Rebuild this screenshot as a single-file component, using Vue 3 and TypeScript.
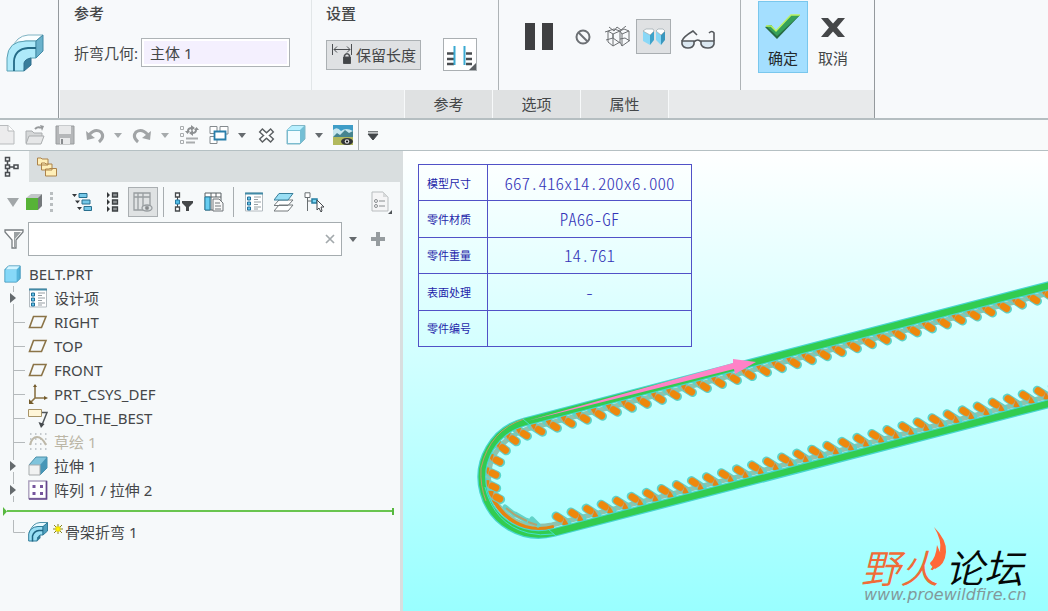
<script setup lang="ts">
import { ref } from 'vue'

interface TreeNode {
  label: string
  icon: string
  expandable?: boolean
  muted?: boolean
}

interface Tooth {
  x: number
  y: number
  angle: number
  side: number
}

const bendBody = ref('主体 1')
const query = ref('')

const tabs: string[] = ['参考', '选项', '属性']

const nodes: TreeNode[] = [
  { label: '设计项', icon: 'design', expandable: true },
  { label: 'RIGHT', icon: 'plane' },
  { label: 'TOP', icon: 'plane' },
  { label: 'FRONT', icon: 'plane' },
  { label: 'PRT_CSYS_DEF', icon: 'csys' },
  { label: 'DO_THE_BEST', icon: 'note' },
  { label: '草绘 1', icon: 'sketch', muted: true },
  { label: '拉伸 1', icon: 'extrude', expandable: true },
  { label: '阵列 1 / 拉伸 2', icon: 'pattern', expandable: true },
]

const specs: [string, string][] = [
  ['模型尺寸', '667.416x14.200x6.000'],
  ['零件材质', 'PA66-GF'],
  ['零件重量', '14.761'],
  ['表面处理', '-'],
  ['零件编号', ''],
]

const teeth: Tooth[] = []
for (let k = -16; k <= 20; k++) {
  teeth.push({ x: 362 + 15 * k, y: 220 - 3.97 * k, angle: 33, side: -1 })
}
for (let k = -13; k <= 20; k++) {
  teeth.push({ x: 351 + 15.04 * k, y: 315.5 - 3.93 * k, angle: 33, side: 1 })
}
const bendTeeth: [number, number, number, number][] = [
  [111, 289, 36, -1],
  [101, 298, 38, -1],
  [95, 310, 28, -1],
  [91, 323, 25, -1],
  [91, 336, 26, -1],
  [95, 347, 28, -1],
]
for (const [x, y, angle, side] of bendTeeth) teeth.push({ x, y, angle, side })
</script>

<template>
  <svg class="sprite" aria-hidden="true">
    <symbol id="i-bend" viewBox="0 0 38 38">
      <path d="M6 15Q10 2 22 1H37L30 7H20Q9 8 4 17Z" fill="#fafeff" stroke="#7fb3c3" />
      <path d="M1 37V24Q2 7 20 7H30V24H25Q19 25 18 37Z" fill="#aeeafa" stroke="#5ba0b4" />
      <path d="M30 7L37 1V17L30 24Z" fill="#6ab2cc" stroke="#438aa5" />
      <path d="M18 37V29Q19 25 25 24V31Z" fill="#397e9c" stroke="#30718f" />
      <path d="M8 37V27Q9 15 22 14H30" fill="none" stroke="#246b87" stroke-width="1.8" />
    </symbol>
    <symbol id="i-bend-small" viewBox="0 0 20 20">
      <path d="M2 9Q5 1 12 .5H19.500L15 5H9Q4 6 1 11Z" fill="#e8faff" stroke="#4f93ab" />
      <path d="M.7 19V12Q2 5 10 4.500H15V13H12Q9 14 9 19Z" fill="#9adff5" stroke="#2f7c99" />
      <path d="M15 4.500L19.500 .7V9L15 13Z" fill="#4f9fbd" stroke="#2f7c99" />
      <path d="M9 19.500Q9 14 12.500 13V16Z" fill="#2f7795" />
      <path d="M4.500 19.500V14Q6 9 11 8.500H15" fill="none" stroke="#1e6482" stroke-width="1.500" />
    </symbol>
    <symbol id="i-caret" viewBox="0 0 8 5"><path d="M0 0H8L4 5Z" fill="currentColor" /></symbol>
    <symbol id="i-part" viewBox="0 0 20 20">
      <path d="M1 5L5 1H18V15L14 19H1Z" fill="#55b5dc" stroke="#3b93b8" />
      <path d="M1.500 5.500H14V18.500H1.500Z" fill="#86d8f8" />
      <path d="M2 5L5 1.500H17.500L14 5Z" fill="#d5f5ff" />
    </symbol>
    <symbol id="i-design" viewBox="0 0 20 20">
      <path d="M1.500 1H18.500V19H1.500Z" fill="#fff" stroke="#b3bbc0" />
      <path d="M1 1.500H19" stroke="#418aa7" stroke-width="2" />
      <path d="M3.500 5H6.500V8H3.500ZM3.500 10H6.500V13H3.500ZM3.500 15H6.500V18H3.500Z" fill="#65c5ea" stroke="#236f98" />
      <path d="M10 5H17M10 7.500H14M10 10H17M10 12.500H14M10 15H17M10 17H14" stroke="#969ea3" />
    </symbol>
    <symbol id="i-plane" viewBox="0 0 20 20"><path d="M5.500 4.500H18L13.500 15.500H1.500Z" fill="none" stroke="#8b7447" stroke-width="1.600" /></symbol>
    <symbol id="i-csys" viewBox="0 0 20 20">
      <path d="M7 2V14H18M7 14L2 19" fill="none" stroke="#8b7447" stroke-width="1.600" />
      <path d="M5 3L7 0L9 3ZM16 12L20 14L16 16ZM1 15V20H6Z" fill="#735b2c" />
    </symbol>
    <symbol id="i-note" viewBox="0 0 20 20">
      <path d="M.5 1.500H13.500V8.500H.5Z" fill="#fff6d8" stroke="#a79468" />
      <path d="M14 4.500H19L14 17" fill="none" stroke="#51565a" stroke-width="1.500" />
      <path d="M10.500 14L16.500 16L13 20Z" fill="#454a4e" />
    </symbol>
    <symbol id="i-sketch" viewBox="0 0 20 20">
      <path d="M2 2H19M2 7H19M2 12H19M2 17H19" stroke="#b4bbc0" stroke-width="1.500" stroke-dasharray="1.500 3.500" />
      <path d="M2 13Q4 5 9 5Q14 5 18 13" fill="none" stroke="#bdb8a8" stroke-width="2" />
    </symbol>
    <symbol id="i-extrude" viewBox="0 0 20 20">
      <path d="M1 9L8 1H19V12L12 19Z" fill="#80c4dc" stroke="#4a8fa9" />
      <path d="M12 9L19 1V12L12 19Z" fill="#4796b7" />
      <path d="M1 9H12V19H1Z" fill="#f1f2f2" stroke="#a6abad" />
    </symbol>
    <symbol id="i-pattern" viewBox="0 0 20 20">
      <path d="M.8 1H18.500V18.500H.8Z" fill="#fff" stroke="#aaa0bd" stroke-width="1.400" />
      <path d="M18.500 1V19H1" fill="none" stroke="#65458d" stroke-width="1.600" />
      <path d="M4.500 5H7.500V8H4.500ZM12 5H15V8H12ZM4.500 12H7.500V15H4.500ZM12 12H15V15H12Z" fill="#76559d" />
    </symbol>
  </svg>

  <main class="app">
    <header class="ribbon">
      <div class="feature"><svg width="38" height="38"><use href="#i-bend" /></svg></div>
      <div class="dash">
        <div class="groups">
          <section class="group refs">
            <h2>参考</h2>
            <div class="field">
              <label for="bend-body">折弯几何:</label>
              <input id="bend-body" v-model="bendBody" type="text" />
            </div>
          </section>
          <section class="group settings">
            <h2>设置</h2>
            <div class="controls">
              <button class="keep" type="button" aria-pressed="true">
                <svg width="22" height="21" viewBox="0 0 22 21" fill="none" stroke="#4c4f52">
                  <path d="M1.500 0V11M20.500 0V11M3 5.500H19M6 2.500L3 5.500L6 8.500M16 2.500L19 5.500L16 8.500" />
                  <path d="M13.500 13V11.500Q16 8 18.500 11.500V13" stroke-width="1.500" /><path d="M12.500 13H19.500V19.500H12.500Z" fill="#424548" />
                </svg>
                <span>保留长度</span>
              </button>
              <button class="clip" type="button" aria-label="截面属性控制">
                <svg width="32" height="31" viewBox="0 0 32 31">
                  <path d="M3 14.500H10M3 20H10M3 25H10M22 14.500H28M22 20H28M22 25H28" stroke="#494d50" stroke-width="2.500" />
                  <path d="M10.500 7V26M20.500 7V26" stroke="#3ba9d1" stroke-width="2" />
                  <path d="M32 24V31H25Z" fill="#5c6064" />
                </svg>
              </button>
            </div>
          </section>
          <section class="group preview">
            <button type="button" aria-label="暂停" class="pause"><svg width="30" height="28"><path d="M1 0H11V27H1ZM18 0H29V27H18Z" fill="#3f4042" /></svg></button>
            <button type="button" aria-label="无预览"><svg width="16" height="16" fill="none" stroke="#6c7074" stroke-width="2"><circle cx="8" cy="8" r="6.500" /><path d="M3.500 3.500L12.500 12.500" /></svg></button>
            <button type="button" aria-label="分离"><svg width="26" height="22" viewBox="0 0 26 22" fill="none" stroke="#6d7073">
              <path d="M3 5L8 8L15 5L9 3ZM3 5V16L8 20L15 16V5M8 8V20M17 8L24 5V15L17 20L15 16M17 8V20M17 8L15 5L19 3L24 5M4 1L9 5L12 1M12 1L16 4L21 0M0 6L3 5M1 14L8 12L15 17M8 12V8M15 13L20 12L25 15" />
            </svg></button>
            <button type="button" class="attached" aria-label="附加" aria-pressed="true"><svg width="24" height="18" viewBox="0 0 24 18">
              <path d="M1 3V13L8 17V7Z" fill="#8ad8f7" /><path d="M8 7L12 3V12L8 17Z" fill="#3da2ca" />
              <path d="M14 3V12L19 17V7Z" fill="#86d6f5" /><path d="M19 7L23 3V12L19 17Z" fill="#3a97be" />
              <path d="M1 3L4 1H11L12 3L8 7ZM14 3L16 1H21L23 3L19 7Z" fill="#fff" stroke="#98a6ac" stroke-width=".7" />
            </svg></button>
            <button type="button" class="verify" aria-label="验证"><svg width="34" height="19" viewBox="0 0 34 19" fill="none" stroke="#55595d" stroke-width="1.600">
              <path d="M1 11H13V14Q12 18 7 18Q2 18 1 14ZM20 11H33V14Q32 18 27 18Q21 18 20 14Z" fill="#dbe8f1" />
              <path d="M13 12Q17 8 20 12M1 11Q2 7 12 1L16 5M33 11V3Q31 0 28 3" />
            </svg></button>
          </section>
          <section class="group finish">
            <button type="button" class="action ok">
              <svg width="36" height="26" viewBox="0 0 36 26"><path d="M0 13L6 11L11 18L26 1H35L12 25Z" fill="#276b43" /><path d="M1 12L6 11L11 17L26 1H35L12 22Z" fill="#35a05a" /><path d="M1 12H6L11 17L26 1H35" fill="none" stroke="#baf260" stroke-width="1.500" /></svg>
              <span>确定</span>
            </button>
            <button type="button" class="action">
              <svg width="24" height="26" viewBox="0 0 24 26"><path d="M0 4H7L12 9.500L17 4H24L16 13.500L24 23H17L12 17.500L7 23H0L8 13.500Z" fill="#454749" /></svg>
              <span>取消</span>
            </button>
          </section>
        </div>
        <nav class="tabs"><button v-for="tab in tabs" :key="tab" type="button">{{ tab }}</button></nav>
      </div>
    </header>

    <div class="quick">
      <button type="button" class="newdoc" aria-label="新建"><svg width="15" height="20" viewBox="0 0 15 20"><path d="M-5 .5H8L14 6V19H-5Z" fill="#ececed" stroke="#b8bbbd" /><path d="M8 .5V6H14" fill="#fff" stroke="#b8bbbd" /></svg></button>
      <button type="button" aria-label="打开"><svg width="20" height="20" viewBox="0 0 20 20"><path d="M1 18V6H7L9 8H17V11" fill="#d5d7d8" stroke="#aaadaf" /><path d="M4 11H19L16 19H1Z" fill="#e6e7e8" stroke="#aaadaf" /><path d="M10 4Q13 1 16 3" fill="none" stroke="#96999b" stroke-width="2" /><path d="M15 0L19 1L17 6Z" fill="#96999b" /></svg></button>
      <button type="button" aria-label="保存"><svg width="20" height="20" viewBox="0 0 20 20"><path d="M1 1H19V19H1Z" fill="#b5b7b9" stroke="#999c9e" /><path d="M4 1H16V9H4Z" fill="#e7e8e9" /><path d="M5 13H15V19H5Z" fill="#e9eaeb" /><path d="M7 14V19" stroke="#898c8f" stroke-width="2" /></svg></button>
      <button type="button" aria-label="撤消"><svg width="20" height="20" viewBox="0 0 20 20"><path d="M4 10Q10 3 16 7Q20 12 14 17" fill="none" stroke="#a1a4a6" stroke-width="3" /><path d="M1 6L2 15L10 13Z" fill="#a1a4a6" /></svg></button>
      <button type="button" class="arrow dim" aria-label="撤消列表"><svg width="8" height="5"><use href="#i-caret" /></svg></button>
      <button type="button" aria-label="重做"><svg width="20" height="20" viewBox="0 0 20 20"><path d="M16 10Q10 3 4 7Q0 12 6 17" fill="none" stroke="#a1a4a6" stroke-width="3" /><path d="M19 6L18 15L10 13Z" fill="#a1a4a6" /></svg></button>
      <button type="button" class="arrow dim" aria-label="重做列表"><svg width="8" height="5"><use href="#i-caret" /></svg></button>
      <button type="button" aria-label="重新生成"><svg width="20" height="20" viewBox="0 0 20 20" fill="none" stroke="#a9acae"><path d="M1.500 1.500H4.500V4.500H1.500ZM1.500 8.500H4.500V11.500H1.500ZM1.500 15.500H4.500V18.500H1.500Z" /><path d="M7 13.500H19M7 17.500H16" stroke-width="1.800" /><path d="M9 6Q9 3 13 3M17 5Q17 8 13 8" stroke="#8d9092" stroke-width="2" /><path d="M12 0L16 3L12 6ZM14 5L10 8L14 11ZM15 5H20L17.500 2ZM6 6H11L8.500 9Z" fill="#8d9092" stroke="none" /></svg></button>
      <button type="button" aria-label="窗口"><svg width="20" height="20" viewBox="0 0 20 20" fill="#fff" stroke="#848a8e"><path d="M1 1.500H8V8.500H1ZM11 1.500H19V9H11ZM1 11.500H8V18.500H1Z" /><path d="M5.500 6.500H16.500V14.500H5.500Z" stroke="#297eaa" stroke-width="1.800" /></svg></button>
      <button type="button" class="arrow" aria-label="窗口列表"><svg width="8" height="5"><use href="#i-caret" /></svg></button>
      <button type="button" aria-label="关闭"><svg width="20" height="20" viewBox="0 0 20 20"><path d="M4.500 5L16.500 16M16.500 5L4.500 16" stroke="#5c6063" stroke-width="5.500" /><path d="M5.500 6L15.500 15M15.500 6L5.500 15" stroke="#fff" stroke-width="2.500" /></svg></button>
      <button type="button" aria-label="显示样式"><svg width="20" height="20" viewBox="0 0 20 20"><path d="M1 5L6 .5H19V14L14 19H1Z" fill="#74bfd5" stroke="#82b8c8" /><path d="M1 5L6 1H18L14 5Z" fill="#b9f0ff" /><path d="M2 6H14V18H2Z" fill="#f3fcff" /></svg></button>
      <button type="button" class="arrow" aria-label="显示样式列表"><svg width="8" height="5"><use href="#i-caret" /></svg></button>
      <button type="button" aria-label="场景"><svg width="20" height="20" viewBox="0 0 20 20"><path d="M0 0H20V20H0Z" fill="#3f9dc7" /><path d="M0 5Q4 1 8 6Q13 2 20 6V12H0Z" fill="#c7e6ee" /><path d="M0 12L4 8L7 10L12 5L16 8L20 6V13H0Z" fill="#46848f" /><path d="M0 12H20V20H0Z" fill="#b2b95d" /><ellipse cx="14" cy="16.500" rx="6" ry="3.500" fill="#343638" /><circle cx="14" cy="16.500" r="2.300" fill="#d7d7d7" /><circle cx="14" cy="16.500" r="1" /></svg></button>
      <button type="button" class="customize" aria-label="自定义"><svg width="12" height="9"><path d="M1 .8H11M1 3H11L6 9Z" fill="#424649" stroke="#424649" /></svg></button>
    </div>

    <div class="workspace">
      <aside class="navigator">
        <div class="navtabs">
          <button type="button" class="active" aria-label="模型树"><svg width="18" height="22" viewBox="0 0 18 22" fill="none" stroke="#484c50" stroke-width="1.500"><path d="M3.500 1.500H7.500V5H3.500ZM3.500 9H7.500V12.500H3.500ZM3.500 16.500H7.500V20H3.500ZM12 9H16V12.500H12ZM5.500 5V9M5.500 13V16M8 11H12" /></svg></button>
          <button type="button" aria-label="文件夹"><svg width="22" height="22" viewBox="0 0 22 22" fill="#ffefb8" stroke="#ac834a"><path d="M1.500 9V2H5L6 3H12V9ZM5.500 14V7H9L10 8H16V14ZM9.500 20V13H13L14 12.500H20.500V20Z" /></svg></button>
        </div>
        <div class="panel">
          <div class="treebar">
            <button type="button" class="mode" aria-label="树类型">
              <svg width="12" height="9"><path d="M0 0H12L6 9Z" fill="#a2a7a9" /></svg>
              <svg width="18" height="18"><path d="M1 5L6 1H17L14 5Z" fill="#c2c6c8" /><path d="M13 5L17 1V13L13 17Z" fill="#74797b" /><path d="M1 5H13V17H1Z" fill="#57b337" /></svg>
            </button>
            <span class="grip"></span>
            <button type="button" aria-label="全部展开"><svg width="20" height="20" viewBox="0 0 20 20"><path d="M7 1.500H15V5.500H7ZM10 8H18V12H10ZM12 14.500H19.500V18.500H12Z" fill="#75c8e8" stroke="#286f8e" /><path d="M0 2H5L2.500 5ZM3 8.500H8L5.500 11.500ZM5 15H10L7.500 18Z" fill="#34383b" /></svg></button>
            <button type="button" aria-label="全部折叠"><svg width="20" height="20" viewBox="0 0 20 20"><path d="M10.500 1H15.500V5H10.500ZM10.500 8H15.500V12H10.500ZM10.500 15H15.500V19H10.500Z" fill="#8b9092" stroke="#3d4144" stroke-width="1.300" /><path d="M5 0V6L8 3ZM5 7V13L8 10ZM5 14V20L8 17Z" fill="#343739" /></svg></button>
            <button type="button" class="pressed" aria-label="列显示" aria-pressed="true"><svg width="20" height="20" viewBox="0 0 20 20" fill="none" stroke="#989da0" stroke-width="1.300"><path d="M1 1H17V18H1ZM1 5H17M5 1V18M10 1V18" /><ellipse cx="14" cy="16" rx="5" ry="3" fill="#dce0e1" /><circle cx="14" cy="16" r="1.500" fill="#777" /></svg></button>
            <span class="sep"></span>
            <button type="button" aria-label="树过滤器"><svg width="20" height="20" viewBox="0 0 20 20"><path d="M1.500 1H5.500V5H1.500ZM1.500 15H5.500V19H1.500Z" fill="#fff" stroke="#45494c" stroke-width="1.300" /><path d="M3.500 5V15" stroke="#45494c" /><path d="M1.500 8H5.500V12H1.500Z" fill="#53bde6" stroke="#287ba3" /><path d="M8 9H19V11L15 15V19H12V15L8 11Z" fill="#45484a" /></svg></button>
            <button type="button" aria-label="树列"><svg width="20" height="20" viewBox="0 0 20 20"><path d="M1 1H17V18H1ZM1 5H17M7 1V18M12 1V5" fill="#fff" stroke="#596064" /><path d="M1 5H6V18H1Z" fill="#67cdf0" stroke="#237da0" /><path d="M9 7H15L19 11V19H9Z" fill="#f8f8f8" stroke="#71777a" /><path d="M11 11H16M11 14H17M11 17H17" stroke="#71777a" /></svg></button>
            <span class="sep"></span>
            <button type="button" aria-label="设计项"><svg width="20" height="20"><use href="#i-design" /></svg></button>
            <button type="button" aria-label="层"><svg width="20" height="20" viewBox="0 0 20 20" fill="#fff" stroke="#747a7d"><path d="M5 13H19L14 19H0ZM5 8H19L14 13.500H0Z" /><path d="M5 1.500H19L14 8H0Z" fill="#99def4" stroke="#397f9b" /></svg></button>
            <button type="button" aria-label="选择"><svg width="20" height="20" viewBox="0 0 20 20"><path d="M1 .8H6V5.500H1ZM3.500 6V19M3.500 9H9" fill="#fff" stroke="#696f72" /><path d="M8 7H13V11H8Z" fill="#7ad4f2" stroke="#247fa3" stroke-width="1.500" /><path d="M13 8V18L15 16L17 20L18 19L17 15H20Z" fill="#fff" stroke="#45494c" /></svg></button>
            <button type="button" class="settings-btn" aria-label="设置"><svg width="22" height="24" viewBox="0 0 22 24"><path d="M2 2H13L18 7V21H2Z" fill="#f5f5f6" stroke="#b9bdbf" /><path d="M13 2V7H18" fill="#d7d9da" /><circle cx="6" cy="11" r="1.500" fill="none" stroke="#8a8e90" /><circle cx="6" cy="16" r="1.500" fill="none" stroke="#8a8e90" /><path d="M9 11H15M9 16H15" stroke="#8a8e90" /><path d="M22 20V24H18Z" fill="#505558" /></svg></button>
          </div>

          <div class="search">
            <label for="tree-search" aria-label="过滤"><svg width="20" height="21" viewBox="0 0 20 21"><path d="M1 1H19V3L12 11V19H8V11L1 3Z" fill="#fff" stroke="#787e81" stroke-width="1.300" /><path d="M10 3H17L11 10V18H10Z" fill="#9ca1a3" /></svg></label>
            <div class="box">
              <input id="tree-search" v-model="query" type="text" />
              <button type="button" aria-label="清除"><svg width="10" height="10"><path d="M1 1L9 9M9 1L1 9" stroke="#a3a9ac" stroke-width="1.700" /></svg></button>
            </div>
            <button type="button" aria-label="搜索选项"><svg width="8" height="5"><use href="#i-caret" /></svg></button>
            <button type="button" class="add" aria-label="添加"><svg width="14" height="14"><path d="M5 0H9V5H14V9H9V14H5V9H0V5H5Z" fill="#969c9f" /></svg></button>
          </div>

          <div class="root"><svg width="18" height="18"><use href="#i-part" /></svg><span>BELT.PRT</span></div>
          <ul class="tree">
            <li v-for="node in nodes" :key="node.label">
              <svg class="gutter" width="25" height="24">
                <template v-if="node.expandable"><path d="M13.500 0V6M13.500 18V24" stroke="#b5babc" /><path d="M10 7L16 12L10 17Z" fill="#646a6d" /></template>
                <path v-else d="M13.500 0V24M13.500 12.500H25" stroke="#b5babc" />
              </svg>
              <svg width="20" height="20"><use :href="'#i-' + node.icon" /></svg>
              <span :class="{ muted: node.muted }">{{ node.label }}</span>
            </li>
          </ul>
          <div class="insert"><svg width="4" height="9"><path d="M0 0L4 4.500L0 9Z" fill="#57b83f" /></svg><i></i><svg width="2" height="7"><path d="M0 0H2V7H0Z" fill="#57b83f" /></svg></div>
          <ul class="tree">
            <li>
              <svg class="gutter" width="25" height="24"><path d="M13.500 0V12.500H25" fill="none" stroke="#b5babc" /></svg>
              <svg width="20" height="20"><use href="#i-bend-small" /></svg>
              <svg class="spark" width="10" height="10"><path d="M5 0V10M0 5H10M1 1L9 9M9 1L1 9" stroke="#8a8520" /><path d="M3 3H7V7H3Z" fill="#fff200" stroke="#e8d900" /></svg>
              <span>骨架折弯 1</span>
            </li>
          </ul>
        </div>
      </aside>

      <section class="canvas">
        <svg class="model" viewBox="0 0 645 461" preserveAspectRatio="xMinYMin slice">
          <path d="M650 141L124 278Q98 287 88 310Q80 340 98 358Q116 380 149 374L650 244" fill="none" stroke="#8fc3ad" stroke-width="5" />
          <path d="M88 344Q99 368 122 376Q136 380 151 376" fill="none" stroke="#e48411" stroke-width="4" />
          <path d="M102 356L112 364M112 363L124 370M123 369L134 373M129 368L135 374" stroke="#62d3c8" stroke-width="5" stroke-linecap="round" />
          <path d="M103 357L112 364M112 364L124 370M125 371L134 374" stroke="#b2a36f" stroke-width="2" />
          <g v-for="(t, i) in teeth" :key="i" :transform="`translate(${t.x} ${t.y}) rotate(${t.angle})`">
            <path :d="t.side < 0 ? 'M-10 0H3' : 'M-3 0H10'" stroke="#58d5cb" stroke-width="9" stroke-linecap="round" />
            <path :d="t.side < 0 ? 'M-10 0H2' : 'M-2 0H10'" stroke="#a1b69a" stroke-width="7" />
            <path :d="t.side < 0 ? 'M-14 -1L-7 -4L-5 3Z' : 'M14 1L7 4L5 -3Z'" fill="#e48411" />
            <path d="M-2 0H2" stroke="#c29c65" stroke-width="7.500" stroke-linecap="round" />
            <path d="M-2 0H2" stroke="#ee880b" stroke-width="6.500" stroke-linecap="round" />
          </g>
          <path d="M650 133.500L121.500 271A57 57 0 0 0 150.500 381.500L650 251.500" fill="none" stroke="#48d5cf" stroke-width="9" />
          <path d="M650 133.500L121.500 271A57 57 0 0 0 150.500 381.500L650 251.500" fill="none" stroke="#32cc50" stroke-width="6.500" />
          <path d="M121 268Q87 279 78 317Q77 335 83 350" fill="none" stroke="#c19a62" />
          <path d="M82 336Q91 373 125 382Q137 385 151 383" fill="none" stroke="#45dfcc" />
          <path d="M120 268L127 274M145 378L153 385" stroke="#45dfcc" />
          <path d="M124 270L330 212L330 208L353 211L332 223L331 218Z" fill="#ff82c7" />
        </svg>
        <table>
          <tbody><tr v-for="row in specs" :key="row[0]"><th scope="row">{{ row[0] }}</th><td>{{ row[1] }}</td></tr></tbody>
        </table>
        <div class="mark">
          <p><span>野火</span>论坛</p>
          <svg width="18" height="42" viewBox="0 0 18 42"><path d="M4 0Q17 13 16 25Q15 38 5 42Q0 38 0 36Q6 31 7 18Q11 28 10 24Q12 13 4 0Z" fill="#ff6837" /></svg>
          <a href="#">www.proewildfire.cn</a>
        </div>
      </section>
    </div>
  </main>
</template>

<style>
html, body, #app { height: 100%; margin: 0; }
</style>
<style scoped>
* { box-sizing: border-box; }
.sprite { position: absolute; width: 0; height: 0; }
.app { display: flex; flex-direction: column; min-height: 100%; overflow: hidden; background: #f7f9fb; color: #454749; font: 15px/20px "Noto Sans", "Noto Sans CJK SC", sans-serif; }
button { display: flex; flex: none; align-items: center; justify-content: center; padding: 0; border: 0; background: none; color: inherit; font: inherit; }
svg { display: block; flex: none; }
input { font: inherit; color: inherit; min-width: 0; }
.ribbon { display: flex; height: 120px; border-bottom: 2px solid #b5bec1; }
.feature { display: flex; width: 58px; padding: 34px 0 0 6px; }
.dash { display: flex; flex-direction: column; width: 817px; border: solid #94999d; border-width: 0 1px; }
.groups { display: flex; height: 90px; }
h2 { margin: 0; font-size: 15px; line-height: 20px; font-weight: 500; }
.refs { width: 253px; padding: 3px 0 0 15px; border-right: 1px solid #e2e6e8; }
.field { display: flex; align-items: center; margin-top: 15px; gap: 3px; }
.field input { width: 149px; height: 29px; padding: 0 8px; border: 1px solid #aeb3b6; background: #f4f0fe; box-shadow: inset 0 0 0 2px #fff; }
.settings { width: 187px; padding: 3px 0 0 14px; border-right: 1px solid #aeb3b6; }
.controls { display: flex; align-items: center; gap: 22px; margin-top: 15px; }
.keep { width: 95px; height: 30px; gap: 3px; border: 1px solid #abb0b3; background: #dfe1e3; }
.clip { width: 34px; height: 33px; border: 1px solid #aaafb2; background: #fff; }
.preview { display: flex; width: 242px; padding: 19px 0 0 25px; align-items: flex-start; border-right: 1px solid #aeb3b6; }
.preview button { height: 35px; }
.pause { margin-right: 21px; }
.preview button:nth-child(3) { margin: 0 5px 0 14px; }
.preview .attached { width: 35px; border: 1px solid #a9aeb1; background: #dfe1e3; }
.verify { margin-left: 10px; padding-top: 6px; }
.finish { display: flex; padding: 1px 0 0 17px; align-items: flex-start; }
.action { flex-direction: column; width: 50px; height: 72px; gap: 8px; border: 1px solid transparent; padding-top: 8px; }
.ok { border-color: #79c7ed; background: #a4dfff; color: #24292c; }
.tabs { display: flex; flex: 1; margin-left: 1px; padding-left: 344px; background: #e8eaeb; }
.tabs button { width: 88px; border: solid #f7f9fa; border-width: 0 1px 0 0; background: #dfe1e2; }
.tabs button:first-child { width: 89px; border-left-width: 1px; }
.quick { display: flex; align-items: center; gap: 10px; height: 31px; border-bottom: 1px solid #b5c0c3; background: #f8fafb; color: #666b6f; }
.arrow { margin-left: -1px; }
.quick .dim { color: #a6aaac; }
.quick .newdoc { width: 15px; }
.customize { align-self: stretch; margin-left: -5px; padding-left: 8px; border-left: 1px solid #aab0b3; }
.workspace { display: flex; flex: 1; }
.navigator { width: 403px; flex: none; background: #d9dedf; }
.navtabs { display: flex; height: 31px; }
.navtabs button { width: 36px; }
.navtabs .active { width: 29px; padding-right: 7px; background: #f6f9fa; }
.panel { margin-right: 3px; min-height: calc(100% - 31px); background: #f6f9fa; }
.treebar { display: flex; align-items: center; gap: 10px; height: 40px; padding: 0 8px 0 7px; }
.mode { gap: 6px; }
.grip { width: 3px; height: 20px; margin: 0 9px 0 -3px; border-left: 3px dotted #b9bec0; }
.pressed { width: 30px; height: 30px; margin: 0 -5px 0 -4px; border: 1px solid #aaafb2; background: #dfe2e3; }
.sep { width: 1px; height: 30px; background: #a7adb0; }
.treebar .sep:nth-of-type(3) { margin-left: -1px; }
.settings-btn { margin-left: auto; }
.search { display: flex; align-items: center; height: 34px; padding-left: 4px; color: #656a6d; }
.box { display: flex; width: 314px; height: 34px; margin: 0 7px 0 4px; border: 1px solid #a5acaf; background: #fff; }
.box input { flex: 1; border: 0; outline: 0; padding: 0 6px; background: none; }
.box button { width: 22px; }
.add { margin-left: 14px; }
.root { display: flex; align-items: center; gap: 7px; height: 24px; margin-top: 6px; padding-left: 4px; }
.tree { margin: 0; padding: 0; list-style: none; }
.tree li { display: flex; align-items: center; height: 24px; }
.gutter { margin-right: 3px; }
.gutter + svg { margin-right: 6px; }
.muted { color: #bbb6a6; }
.insert { display: flex; align-items: center; height: 18px; padding: 0 6px 0 3px; }
.insert i { flex: 1; height: 2px; background: #69c54f; }
.spark { margin: 0 2px 6px -1px; }
.canvas { position: relative; flex: 1; min-width: 0; overflow: hidden; background: linear-gradient(#fff, #9ff); }
.model { position: absolute; inset: 0; width: 100%; height: 100%; }
table { position: relative; width: 274px; height: 183px; margin: 13px 0 0 15px; border-collapse: collapse; table-layout: fixed; color: #3434b8; }
th, td { padding: 0; border: 1px solid #5151c7; text-align: center; }
th { width: 69px; font: 11px/20px "Noto Sans CJK SC", sans-serif; color: #1f1faa; text-align: right; padding-right: 16px; }
td { font: 300 17px/20px "Noto Sans CJK SC", sans-serif; font-feature-settings: "hwid"; }
.mark { position: absolute; right: 15px; bottom: 8px; width: 172px; }
.mark p { display: flex; gap: 6px; margin: 0; color: #050808; font: italic 350 39px/42px "Noto Sans CJK SC", sans-serif; white-space: nowrap; }
.mark p span { color: #f06b37; }
.mark svg { position: absolute; left: 69px; top: -18px; }
.mark a { display: block; padding-left: 3px; color: #82999b; font: italic 16px/16px "DejaVu Sans", sans-serif; text-decoration: none; }
</style>
